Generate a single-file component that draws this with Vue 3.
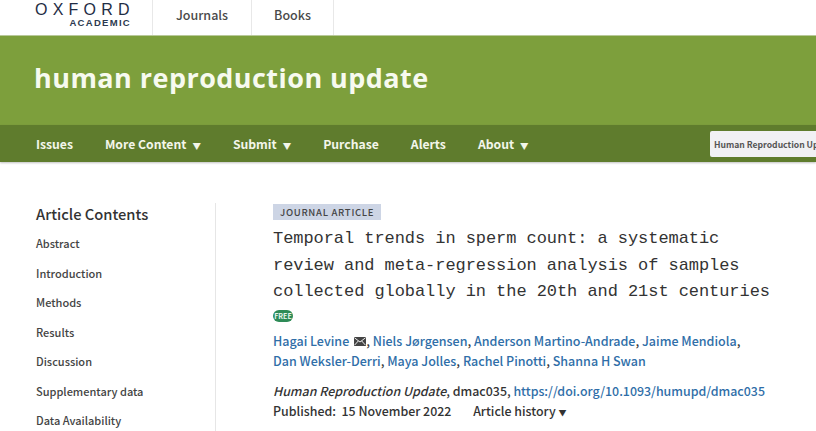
<script setup>
const navItems = [
  { label: 'Issues', caret: false },
  { label: 'More Content', caret: true },
  { label: 'Submit', caret: true },
  { label: 'Purchase', caret: false },
  { label: 'Alerts', caret: false },
  { label: 'About', caret: true },
]
const contents = ['Abstract', 'Introduction', 'Methods', 'Results', 'Discussion', 'Supplementary data', 'Data Availability']
</script>

<template>
  <div class="page">
    <header class="topbar">
      <div class="logo">
        <span class="logo-main">OXFORD</span>
        <span class="logo-sub">ACADEMIC</span>
      </div>
      <a class="top-link journals">Journals</a>
      <a class="top-link books">Books</a>
    </header>

    <div class="banner">
      <h1 class="journal-title">human reproduction update</h1>
    </div>

    <nav class="nav">
      <a v-for="item in navItems" :key="item.label" class="nav-item">
        {{ item.label }}<span v-if="item.caret" class="caret">▼</span>
      </a>
      <div class="search">Human Reproduction Update</div>
    </nav>

    <main class="body">
      <aside class="sidebar">
        <h2 class="side-title">Article Contents</h2>
        <a v-for="c in contents" :key="c" class="side-link">{{ c }}</a>
      </aside>

      <article class="article">
        <span class="badge">JOURNAL ARTICLE</span>
        <h2 class="title">Temporal trends in sperm count: a systematic<br>review and meta-regression analysis of samples<br>collected globally in the 20th and 21st centuries</h2>
        <div class="free"><span>FREE</span></div>
        <p class="authors">
          <a>Hagai Levine</a>
          <svg class="mail" width="12" height="9" viewBox="0 0 12 9">
            <rect width="12" height="9" rx="0.5" fill="#444" />
            <path d="M0.5 0.8 6 5 11.5 0.8M0.5 8.2 4.4 3.9M11.5 8.2 7.6 3.9" fill="none" stroke="#fff" stroke-width="0.9" />
          </svg>, <a>Niels Jørgensen</a>, <a>Anderson Martino-Andrade</a>, <a>Jaime Mendiola</a>,<br>
          <a>Dan Weksler-Derri</a>, <a>Maya Jolles</a>, <a>Rachel Pinotti</a>, <a>Shanna H Swan</a>
        </p>
        <p class="citation">
          <em>Human Reproduction Update</em>, dmac035, <a>https://doi.org/10.1093/humupd/dmac035</a><br>
          Published:&nbsp; 15 November 2022 <span class="history">Article history <span class="small-caret">▼</span></span>
        </p>
      </article>
    </main>
  </div>
</template>

<style scoped>
.page {
  width: 816px;
  height: 431px;
  overflow: hidden;
  background: #fff;
  font-family: "Noto Sans CJK SC", "Noto Sans", sans-serif;
  color: #333;
}

.topbar {
  display: flex;
  height: 35px;
  box-sizing: border-box;
  padding-left: 35px;
}

.logo {
  width: 117px;
  display: flex;
  flex-direction: column;
  font-family: "Liberation Sans", sans-serif;
  color: #1f2d45;
  margin-top: 2px;
}

.logo-main {
  width: 95px;
  font-size: 16px;
  line-height: 16px;
  letter-spacing: 5.2px;
  white-space: nowrap;
}

.logo-sub {
  width: 96px;
  text-align: right;
  font-size: 9.5px;
  font-weight: 700;
  line-height: 10px;
  letter-spacing: 1.3px;
  color: #2c3a50;
  white-space: nowrap;
}

.top-link {
  display: flex;
  align-items: center;
  justify-content: center;
  box-sizing: border-box;
  border-left: 1px solid #e8e8e8;
  padding-bottom: 7px;
  font-size: 12.5px;
  font-weight: 500;
  color: #4a4a4a;
}

.journals { width: 99px; }

.books {
  width: 83px;
  border-right: 1px solid #e8e8e8;
}

.banner {
  height: 90px;
  box-sizing: border-box;
  border-top: 1px solid #b9c99a;
  background: #7d9f3c;
  padding: 25px 0 0 34px;
}

.journal-title {
  margin: 0;
  font-family: "Open Sans", sans-serif;
  font-size: 27px;
  line-height: 34px;
  font-weight: 700;
  letter-spacing: 0.45px;
  color: #f7faef;
}

.nav {
  display: flex;
  align-items: center;
  height: 37px;
  background: #5f7c2d;
  box-shadow: 0 1px 2px rgba(0, 0, 0, 0.25);
  padding-left: 36px;
  position: relative;
}

.nav-item {
  margin-right: 32px;
  font-size: 12.2px;
  font-weight: 700;
  color: #f3f6ea;
  white-space: nowrap;
}

.caret {
  font-size: 8.5px;
  margin-left: 6px;
}

.search {
  position: absolute;
  left: 710px;
  top: 6px;
  width: 106px;
  height: 26px;
  overflow: hidden;
  box-sizing: border-box;
  padding-left: 4px;
  border-radius: 2px 0 0 2px;
  background: #f1f1f4;
  font-size: 8.6px;
  font-weight: 700;
  line-height: 26px;
  color: #555;
  white-space: nowrap;
}

.body {
  display: flex;
  padding-top: 41px;
}

.sidebar {
  width: 179px;
  height: 228px;
  margin-left: 36px;
  border-right: 1px solid #e6e6e6;
  display: flex;
  flex-direction: column;
}

.side-title {
  margin: 0 0 4px;
  font-size: 14.7px;
  line-height: 22px;
  font-weight: 500;
  color: #333;
}

.side-link {
  flex: none;
  height: 29.5px;
  font-size: 11px;
  line-height: 29.5px;
  font-weight: 500;
  color: #444;
}

.article {
  margin-left: 57px;
  padding-top: 1px;
}

.badge {
  display: block;
  width: fit-content;
  height: 16px;
  padding: 0 7px;
  background: #cdd5e5;
  font-size: 9.5px;
  line-height: 16px;
  font-weight: 500;
  letter-spacing: 0.7px;
  color: #444;
}

.title {
  margin: 6px 0 0;
  font-family: "Liberation Mono", monospace;
  font-size: 17px;
  line-height: 26.5px;
  font-weight: 400;
  letter-spacing: -0.06px;
  color: #333;
  white-space: nowrap;
}

.free {
  margin-top: 4px;
  width: 20px;
  height: 12px;
  border-radius: 6px;
  background: #2e8b57;
  display: flex;
  align-items: center;
  justify-content: center;
}

.free span {
  font-size: 7px;
  line-height: 12px;
  font-weight: 700;
  color: #e8f5ee;
}

.authors {
  margin: 9px 0 0;
  font-size: 12.5px;
  line-height: 20px;
  font-weight: 500;
  white-space: nowrap;
}

.authors a,
.citation a {
  color: #2f6ea8;
}

.mail {
  margin: 0 0 0 5px;
  vertical-align: -0.5px;
}

.citation {
  margin: 10px 0 0;
  font-size: 12.4px;
  line-height: 20px;
  font-weight: 500;
  white-space: nowrap;
}

.history {
  margin-left: 19px;
}

.small-caret {
  font-size: 8px;
}
</style>

<style>
html, body {
  margin: 0;
  overflow: hidden;
}
</style>
